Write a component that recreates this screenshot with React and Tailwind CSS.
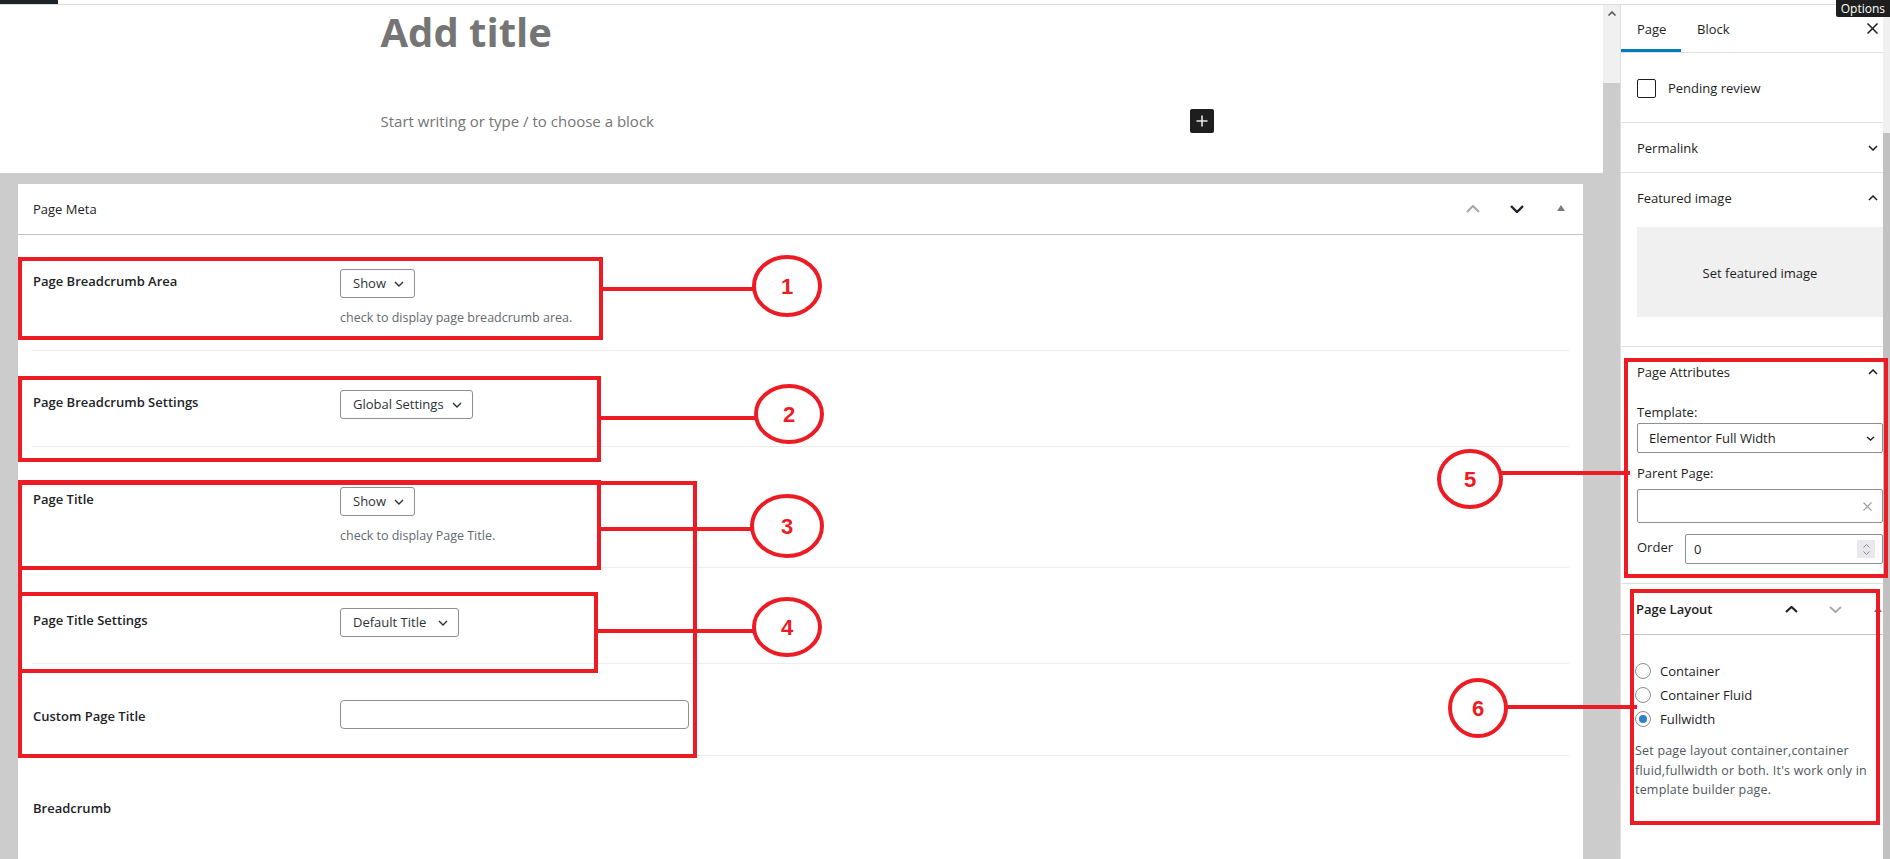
import React from "react";

const RED = "#ed1c24";

function Chev({ dir = "down", w = 14, h = 8, color = "#1e1e1e", sw = 2 }) {
  const d =
    dir === "down"
      ? `M1 1 L${w / 2} ${h - 1} L${w - 1} 1`
      : `M1 ${h - 1} L${w / 2} 1 L${w - 1} ${h - 1}`;
  return (
    <svg width={w} height={h} viewBox={`0 0 ${w} ${h}`} fill="none" stroke={color} strokeWidth={sw}>
      <path d={d} />
    </svg>
  );
}

function Select({ label, w }) {
  return (
    <div
      className={`h-[29px] border border-[#8c8f94] rounded-[3px] flex items-center justify-between pl-[12px] pr-[10px] text-[13px] text-[#2c3338] bg-white ${w}`}
    >
      <span>{label}</span>
      <Chev w={10} h={6} sw={1.4} color="#2c3338" />
    </div>
  );
}

function Row({ cls, label, labelCls = "pt-[3px]", children }) {
  return (
    <div className={`mx-[14px] border-b border-[#ececec] flex items-start ${cls}`}>
      <div className={`w-[308px] pl-[1px] text-[13px] leading-[18px] font-semibold text-[#1d2327] ${labelCls}`}>
        {label}
      </div>
      <div className="flex flex-col">{children}</div>
    </div>
  );
}

function Help({ children }) {
  return <div className="mt-[11px] text-[12.5px] leading-[18px] text-[#646970]">{children}</div>;
}

function Radio({ label, checked }) {
  return (
    <div className="h-[24px] flex items-center gap-[9px]">
      <div className="w-[16px] h-[16px] rounded-full border border-[#8c8f94] bg-white flex items-center justify-center">
        {checked && <div className="w-[8px] h-[8px] rounded-full bg-[#2f7fd0]" />}
      </div>
      <span className="text-[13px] text-[#1e1e1e] pt-[1px]">{label}</span>
    </div>
  );
}

function Overlay() {
  const rects = [
    [20, 259, 581, 79],
    [20, 378, 579, 82],
    [20, 482, 579, 86],
    [20, 483, 675, 273],
    [20, 594, 576, 77],
    [1626, 360, 260, 216],
    [1632, 591, 246, 232],
  ];
  const lines = [
    [603, 289, 754, 289],
    [601, 418, 755, 418],
    [601, 529, 753, 529],
    [598, 631, 755, 631],
    [1501, 473, 1630, 473],
    [1507, 707, 1637, 707],
  ];
  const circles = [
    [787, 286, 33, 29, "1"],
    [789, 414, 33, 28, "2"],
    [787, 526, 35, 30, "3"],
    [787, 627, 33, 28, "4"],
    [1470, 479, 31, 28, "5"],
    [1478, 708, 28, 28, "6"],
  ];
  return (
    <svg className="absolute left-0 top-0 pointer-events-none" width="1890" height="859" viewBox="0 0 1890 859">
      {rects.map(([x, y, w, h], i) => (
        <rect key={i} x={x} y={y} width={w} height={h} fill="none" stroke={RED} strokeWidth="4" />
      ))}
      {lines.map(([x1, y1, x2, y2], i) => (
        <line key={i} x1={x1} y1={y1} x2={x2} y2={y2} stroke={RED} strokeWidth="4" />
      ))}
      {circles.map(([cx, cy, rx, ry, t], i) => (
        <g key={i}>
          <ellipse cx={cx} cy={cy} rx={rx} ry={ry} fill="white" stroke={RED} strokeWidth="4" />
          <text
            x={cx}
            y={cy + 8}
            textAnchor="middle"
            fill={RED}
            fontSize="22"
            fontWeight="bold"
            fontFamily="'Liberation Sans', Arial, sans-serif"
          >
            {t}
          </text>
        </g>
      ))}
    </svg>
  );
}

export default function App() {
  return (
    <div className="w-[1890px] h-[859px] overflow-hidden relative bg-white font-['Open_Sans',sans-serif] text-[#1e1e1e]">
      {/* top strip */}
      <div className="h-[5px] border-b border-[#dcdcde] flex">
        <div className="w-[58px] h-[4px] bg-[#1d2327]" />
      </div>

      <div className="flex h-[854px]">
        {/* editor column */}
        <div className="w-[1620px] flex">
          <div className="w-[1603px] flex flex-col">
            <div className="h-[168px] bg-white">
              <div className="w-[842px] mx-auto">
                <div className="pt-[3px] text-[40px] leading-[48px] font-bold text-[#757575]">Add title</div>
                <div className="mt-[53px] h-[24px] flex items-center justify-between">
                  <span className="text-[15px] text-[#757575]">Start writing or type / to choose a block</span>
                  <div className="mr-[9px] w-[24px] h-[24px] rounded-[2px] bg-[#1e1e1e] flex items-center justify-center">
                    <svg width="12" height="12" viewBox="0 0 12 12" stroke="#e6e6e6" strokeWidth="1.6">
                      <path d="M6 0.5V11.5M0.5 6H11.5" />
                    </svg>
                  </div>
                </div>
              </div>
            </div>
            <div className="flex-1 bg-[#cccccc] pl-[18px] pr-[20px] pt-[11px]">
              <div className="bg-white h-full">
                {/* metabox header */}
                <div className="h-[51px] border-b border-[#c3c4c7] flex items-center">
                  <span className="pl-[15px] pt-[2px] text-[13px] text-[#1d2327] flex-1">Page Meta</span>
                  <div className="flex">
                    <div className="w-[44px] flex justify-center">
                      <Chev dir="up" w={14} h={8} sw={2.2} color="#a7aaad" />
                    </div>
                    <div className="w-[44px] flex justify-center">
                      <Chev dir="down" w={14} h={8} sw={2.4} color="#1d2327" />
                    </div>
                    <div className="w-[44px] flex justify-center">
                      <svg width="8" height="6" viewBox="0 0 8 6">
                        <path d="M4 0L8 6H0Z" fill="#787c82" />
                      </svg>
                    </div>
                  </div>
                </div>

                <Row cls="h-[116px] pt-[34px]" label="Page Breadcrumb Area">
                  <Select label="Show" w="w-[75px]" />
                  <Help>check to display page breadcrumb area.</Help>
                </Row>
                <Row cls="h-[96px] pt-[39px]" label="Page Breadcrumb Settings">
                  <Select label="Global Settings" w="w-[133px]" />
                </Row>
                <Row cls="h-[121px] pt-[40px]" label="Page Title">
                  <Select label="Show" w="w-[75px]" />
                  <Help>check to display Page Title.</Help>
                </Row>
                <Row cls="h-[96px] pt-[40px]" label="Page Title Settings">
                  <Select label="Default Title" w="w-[119px]" />
                </Row>
                <Row cls="h-[92px] pt-[36px]" label="Custom Page Title" labelCls="pt-[7px]">
                  <div className="w-[349px] h-[29px] border border-[#8c8f94] rounded-[4px] bg-white" />
                </Row>
                <div className="mx-[14px] pt-[43px] pl-[1px] text-[13px] leading-[18px] font-semibold text-[#1d2327]">
                  Breadcrumb
                </div>
              </div>
            </div>
          </div>
          {/* editor scrollbar */}
          <div className="w-[17px] flex flex-col">
            <div className="h-[78px] bg-[#f0f0f0] flex justify-center pt-[6px]">
              <svg width="8" height="5" viewBox="0 0 8 5" fill="none" stroke="#505050" strokeWidth="1.5">
                <path d="M0.5 4.5L4 1L7.5 4.5" />
              </svg>
            </div>
            <div className="flex-1 bg-[#cccccc]" />
          </div>
        </div>

        {/* sidebar */}
        <aside className="w-[270px] border-l border-[#e0e0e0] flex">
          <div className="w-[262px] flex flex-col">
            <div className="h-[48px] border-b border-[#e0e0e0] flex items-stretch">
              <div className="w-[60px] border-b-[3px] border-[#007cba] pl-[16px] pt-[6px] flex items-center text-[13px]">
                Page
              </div>
              <div className="pl-[16px] pt-[3px] flex items-center text-[13px] flex-1">Block</div>
              <div className="pr-[5px] flex items-center">
                <svg width="11" height="11" viewBox="0 0 11 11" stroke="#1e1e1e" strokeWidth="1.5">
                  <path d="M0.5 0.5L10.5 10.5M10.5 0.5L0.5 10.5" />
                </svg>
              </div>
            </div>

            <div className="h-[70px] border-b border-[#e0e0e0] px-[16px] pt-[2px] flex items-center gap-[12px]">
              <div className="w-[19px] h-[19px] border border-[#1e1e1e] rounded-[2px]" />
              <span className="text-[13px] pt-[1px]">Pending review</span>
            </div>

            <div className="h-[50px] border-b border-[#e0e0e0] pl-[16px] pr-[5px] flex items-center justify-between">
              <span className="text-[13px] pt-[2px]">Permalink</span>
              <Chev dir="down" w={10} h={6} sw={1.5} />
            </div>

            <div className="h-[174px] border-b border-[#e0e0e0]">
              <div className="h-[50px] pl-[16px] pr-[5px] flex items-center justify-between">
                <span className="text-[13px] pt-[2px]">Featured image</span>
                <Chev dir="up" w={10} h={6} sw={1.5} />
              </div>
              <div className="mt-[4px] ml-[16px] h-[90px] bg-[#f0f0f0] pt-[3px] flex items-center justify-center text-[13px]">
                Set featured image
              </div>
            </div>

            <div className="h-[237px] border-b border-[#e0e0e0] pl-[16px]">
              <div className="h-[50px] pr-[5px] flex items-center justify-between">
                <span className="text-[13px] pt-[2px]">Page Attributes</span>
                <Chev dir="up" w={10} h={6} sw={1.5} />
              </div>
              <div className="mt-[6px] text-[13px] leading-[18px]">Template:</div>
              <div className="mt-[2px] h-[30px] border border-[#8c8f94] rounded-[2px] flex items-center justify-between pl-[11px] pr-[7px] text-[13px]">
                <span className="pt-[2px]">Elementor Full Width</span>
                <Chev dir="down" w={9} h={5} sw={1.4} />
              </div>
              <div className="mt-[11px] text-[13px] leading-[18px]">Parent Page:</div>
              <div className="mt-[7px] h-[34px] border border-[#8c8f94] rounded-[2px] flex items-center justify-end pr-[10px]">
                <svg width="9" height="9" viewBox="0 0 9 9" stroke="#a0a0a0" strokeWidth="1.2">
                  <path d="M0.5 0.5L8.5 8.5M8.5 0.5L0.5 8.5" />
                </svg>
              </div>
              <div className="mt-[11px] flex items-center">
                <div className="w-[48px] text-[13px] -mt-[3px]">Order</div>
                <div className="flex-1 h-[30px] border border-[#8c8f94] rounded-[2px] flex items-center justify-between pl-[8px] pr-[7px] text-[13px]">
                  <span className="pt-[2px]">0</span>
                  <div className="w-[18px] h-[18px] bg-[#e9e9ed] flex flex-col items-center justify-center gap-[3px]">
                    <svg width="7" height="4" viewBox="0 0 7 4" fill="none" stroke="#8a8a8a" strokeWidth="1">
                      <path d="M0.5 3.5L3.5 0.5L6.5 3.5" />
                    </svg>
                    <svg width="7" height="4" viewBox="0 0 7 4" fill="none" stroke="#8a8a8a" strokeWidth="1">
                      <path d="M0.5 0.5L3.5 3.5L6.5 0.5" />
                    </svg>
                  </div>
                </div>
              </div>
            </div>

            {/* Page Layout */}
            <div className="h-[51px] border-b border-[#c3c4c7] flex items-center">
              <span className="pl-[15px] pt-[2px] text-[13px] font-semibold flex-1">Page Layout</span>
              <div className="w-[44px] flex justify-center">
                <Chev dir="up" w={13} h={7} sw={2.2} color="#1d2327" />
              </div>
              <div className="w-[44px] flex justify-center">
                <Chev dir="down" w={13} h={7} sw={2} color="#a7aaad" />
              </div>
              <div className="w-[26px] flex justify-end pr-[1px]">
                <svg width="8" height="6" viewBox="0 0 8 6">
                  <path d="M4 0L8 6H0Z" fill="#787c82" />
                </svg>
              </div>
            </div>
            <div className="pl-[14px] pt-[24px]">
              <Radio label="Container" />
              <Radio label="Container Fluid" />
              <Radio label="Fullwidth" checked />
              <div className="mt-[10px] text-[12.5px] leading-[19.5px] text-[#50575e] tracking-[0.2px]">
                Set page layout container,container
                <br />
                fluid,fullwidth or both. It's work only in
                <br />
                template builder page.
              </div>
            </div>
          </div>
          <div className="w-[7px] flex flex-col">
            <div className="h-[128px] bg-[#f0f0f0]" />
            <div className="flex-1 bg-[#c1c1c1]" />
          </div>
        </aside>
      </div>

      <div className="absolute top-0 right-0 h-[17px] px-[5px] bg-[#1e1e1e] text-white text-[12px] leading-[17px] rounded-bl-[2px]">
        Options
      </div>

      <Overlay />
    </div>
  );
}
